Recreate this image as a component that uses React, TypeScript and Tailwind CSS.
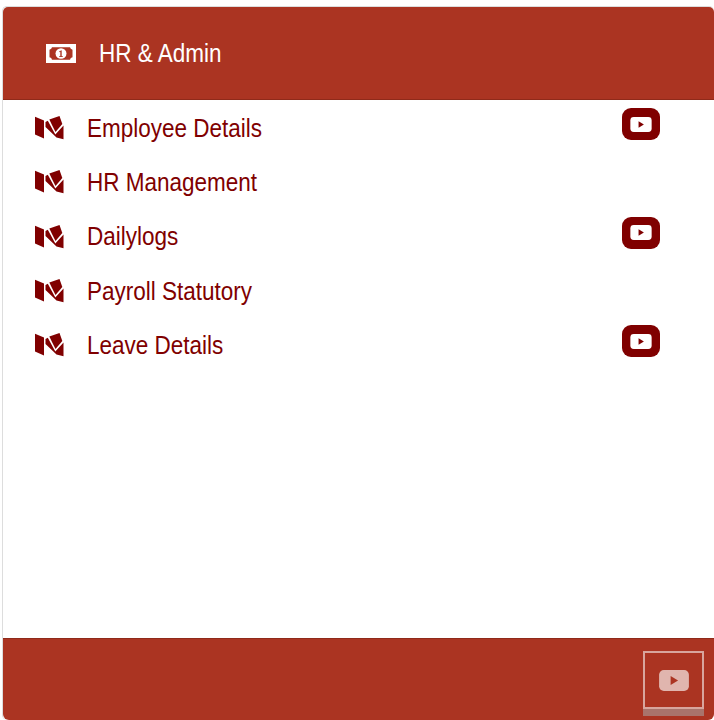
const items = [
  { name: "Employee Details", video: true },
  { name: "HR Management", video: false },
  { name: "Dailylogs", video: true },
  { name: "Payroll Statutory", video: false },
  { name: "Leave Details", video: true },
];

function MapIcon() {
  return (
    <svg width="30" height="24" viewBox="0 0 30 24" fill="#800000">
      <polygon points="0,0.7 9,4.5 9,22.5 0,18.5" />
      <polygon points="14.3,3.5 24.5,0 27.3,8 20.5,16" />
      <polygon points="10.5,6 12.8,4.8 20.3,18.5 28.5,9.5 28.5,23.3 21.5,21.5 10.5,11" />
    </svg>
  );
}

function MoneyIcon() {
  return (
    <svg width="30" height="19" viewBox="0 0 30 20" preserveAspectRatio="none">
      <rect width="30" height="20" fill="#ffffff" />
      <path
        d="M6 3.5h18a3 3 0 0 0 2.5 2.5v8a3 3 0 0 0-2.5 2.5H6A3 3 0 0 0 3.5 14V6A3 3 0 0 0 6 3.5z"
        fill="#ab3422"
      />
      <circle cx="15" cy="10" r="5.5" fill="#ffffff" />
      <path d="M13.3 7.6l2.4-1v6.2h1.2v1h-3.8v-1h1.2V8.2l-1 .4z" fill="#ab3422" />
    </svg>
  );
}

function YoutubeIcon({ fill, play, big }: { fill: string; play: string; big?: boolean }) {
  return (
    <svg width={big ? 30 : 22} height={big ? 21 : 15} viewBox="0 0 22 15.5">
      <rect width="22" height="15.5" rx="3.5" fill={fill} />
      <polygon points="8.5,4.5 14,7.75 8.5,11" fill={play} />
    </svg>
  );
}

export default function App() {
  return (
    <div className="h-[720px] w-[714px] overflow-hidden bg-white pl-[2px] pt-[6px] font-['Liberation_Sans',Arial,sans-serif]">
      <div className="flex h-[714px] flex-col rounded-[5px] border-l border-t border-[#dddddd]">
        <header className="flex h-[92px] items-center rounded-t-[5px] bg-[#ab3422] pl-[43px] text-white">
          <MoneyIcon />
          <h1 className="ml-[23px] mt-[2px] origin-left scale-x-90 text-[25px]">HR &amp; Admin</h1>
        </header>

        <main className="flex-1 border-t border-[#8f2a1a] bg-white pt-[1px]">
          {items.map((item) => (
            <div key={item.name} className="flex h-[54.25px] items-center pl-[32px] pr-[54px] text-[#800000]">
              <MapIcon />
              <span className="ml-[22px] mt-[1px] flex-1 origin-left scale-x-90 text-[25px]">{item.name}</span>
              {item.video && (
                <button className="mb-[8px] flex h-[32px] w-[38px] items-center justify-center rounded-[9px] bg-[#800000]">
                  <YoutubeIcon fill="#ffffff" play="#800000" />
                </button>
              )}
            </div>
          ))}
        </main>

        <footer className="flex h-[82px] justify-end rounded-b-[6px] border-t border-[#8f2a1a] bg-[#ab3422] pr-[10px] pt-[12px]">
          <div className="flex h-[65px] w-[61px] flex-col">
            <div className="flex h-[58px] items-center justify-center border-2 border-[#d8a59d]">
              <YoutubeIcon fill="#e0b5ae" play="#ab3422" big />
            </div>
            <div className="h-[7px] bg-[#a9736b]" />
          </div>
        </footer>
      </div>
    </div>
  );
}
